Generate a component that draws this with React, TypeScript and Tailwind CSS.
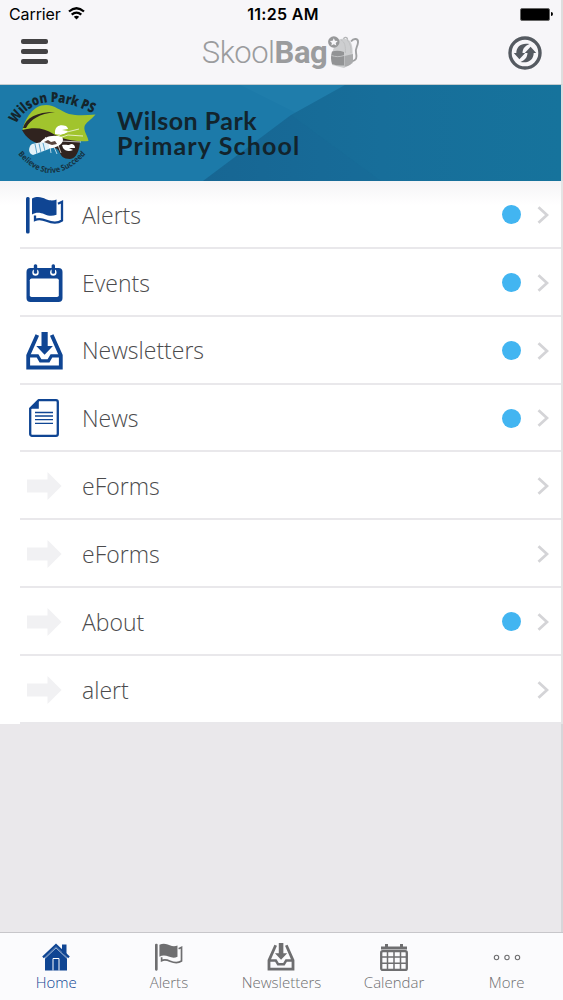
import { FC, ReactNode } from 'react';

interface IconProps {
  className?: string;
}

const FlagIcon: FC<IconProps> = ({ className }) => (
  <svg viewBox="0 0 38 38" className={className} fill="currentColor">
    <rect x="0" y="1" width="3.600" height="36.500" rx="1.500" />
    <path d="M6 2.500C12-.2 16 1.600 20 3.200c4.500 1.800 8 1.300 10.500.2v15.300c-4 1.700-7.500 1.500-12-.4C14 16.400 10 16.100 6 18.600z" />
    <path
      d="M32 7.700l4-1.900v18.700c-4.500 3-10 2.500-15.500.2-5.500-2.300-8.500-2.200-11.500-.7v-4.500"
      fill="none"
      stroke="currentColor"
      strokeWidth="2.300"
    />
  </svg>
);

const EventsIcon: FC<IconProps> = ({ className }) => (
  <svg viewBox="0 0 37 38" className={className}>
    <rect x="0.500" y="4" width="36" height="34" rx="4" fill="currentColor" />
    <rect x="3.800" y="14.500" width="29" height="18.500" rx="1.800" fill="white" />
    {[9.5, 27.3].map((x) => (
      <g key={x}>
        <circle cx={x} cy="8.500" r="3.200" fill="white" />
        <rect x={x - 1.7} y="0.300" width="3.400" height="9.500" rx="1.500" fill="currentColor" />
      </g>
    ))}
  </svg>
);

const InboxIcon: FC<IconProps> = ({ className }) => (
  <svg viewBox="0 0 37 38" className={className} fill="none" stroke="currentColor">
    <path d="M11.300 3L2.200 23.500v12h32.600v-12L25.700 3" strokeWidth="3.800" />
    <path d="M2 23.800h9.500l3 5h8l3-5H35" strokeWidth="3.200" />
    <path d="M15.500 0h6.200v14h5.200l-8.300 8.700-8.300-8.700h5.200z" fill="currentColor" stroke="none" />
  </svg>
);

const NewsIcon: FC<IconProps> = ({ className }) => (
  <svg viewBox="0 0 30 38" className={className} fill="none" stroke="currentColor">
    <path
      d="M9.500 1.200H27a1.800 1.800 0 011.800 1.800v32a1.800 1.800 0 01-1.800 1.800H3A1.800 1.800 0 011.200 35V9.500z"
      strokeWidth="2.300"
      strokeLinejoin="round"
    />
    <path d="M1 9.700L9.800 1v8.700z" fill="currentColor" stroke="none" />
    <path d="M6 13.500h18M6 17h18M6 20.700h18M6 24.300h18" strokeWidth="1.300" />
  </svg>
);

const ArrowIcon: FC<IconProps> = ({ className }) => (
  <svg viewBox="0 0 36 28" className={className} fill="currentColor">
    <path d="M1 7.500h20.500V0L35.500 14l-14 14v-7.500H1z" />
  </svg>
);

const HomeIcon: FC<IconProps> = ({ className }) => (
  <svg viewBox="0 0 28 28" className={className}>
    <path d="M20 1.500h4.500v10H20z" fill="currentColor" />
    <path d="M3 14L14 3.500 25 14v13.500H3z" fill="currentColor" />
    <path d="M1 14.300L14 2l13 12.300" fill="none" stroke="currentColor" strokeWidth="2.300" />
    <path d="M2.800 15.500L14 4.800l11.200 10.700" fill="none" stroke="white" strokeWidth="0.700" />
    <path d="M11 27.500V15.500h6v12" fill="none" stroke="white" strokeWidth="1" />
  </svg>
);

const CalendarIcon: FC<IconProps> = ({ className }) => (
  <svg viewBox="0 0 28 28" className={className} fill="none" stroke="currentColor">
    <path d="M1 5h26M6.500 1v4M21.500 1v4" strokeWidth="3" />
    <rect x="1.200" y="8.200" width="25.600" height="18.800" rx="1.500" strokeWidth="2.300" />
    <path d="M7.500 8v19M14 8v19M20.500 8v19M1 14h26M1 20.300h26" strokeWidth="1.500" />
  </svg>
);

const MoreIcon: FC<IconProps> = ({ className }) => (
  <svg viewBox="0 0 28 28" className={className} fill="none" stroke="currentColor" strokeWidth="1.100">
    <circle cx="3.500" cy="14.500" r="2.200" />
    <circle cx="14" cy="14.500" r="2.200" />
    <circle cx="24.500" cy="14.500" r="2.200" />
  </svg>
);

const BackpackIcon: FC<IconProps> = ({ className }) => (
  <svg viewBox="0 0 32 33" className={className}>
    <path
      d="M23 5.500c3-4 7.500-3 7 1-.3 4-3 6-2 10 1 5 1 8-5 9"
      fill="none"
      stroke="#9fa0a2"
      strokeWidth="1.900"
    />
    <path d="M15.500 4c0-3.500 4-3.500 4 0" fill="none" stroke="#b2b3b5" strokeWidth="1.300" />
    <path d="M8 7c2-4 5-4.500 9-4 5 0 7 4 7.500 10l.5 14-9 5-12-3 1-15z" fill="#cdced0" />
    <path d="M13 4c4 2 4.500 6 4.500 13M19 4c3 3 4 6 4 13" fill="none" stroke="#bbbcbe" strokeWidth="0.800" />
    <path d="M16.500 20l8.500-2v7.500q-3 5-8.500 5z" fill="#a9aaac" />
    <path d="M4 15.500q6-1.500 12 .5v13.500q-7 .5-12-1.500-2-6 0-12.500z" fill="#929395" />
    <path d="M3.500 19.500c4 1.500 8.500 1.500 12.500 0" fill="none" stroke="#c4c5c7" strokeWidth="0.900" />
    <circle cx="5.800" cy="6" r="5.700" fill="#97989a" />
    <path d="M5.800 2.200l1.200 2.500 2.700.3-2 1.900.6 2.700-2.500-1.400-2.500 1.400.6-2.700-2-1.900 2.700-.3z" fill="#f7f6f9" />
  </svg>
);

const RefreshIcon: FC<IconProps> = ({ className }) => (
  <svg viewBox="0 0 34 34" className={className} fill="#555a61">
    <circle cx="17" cy="17" r="15" fill="none" stroke="#555a61" strokeWidth="3.400" />
    <path d="M21.500 8C13 6.500 8.500 10.500 8.300 17H5.800l5.600 6.200 5.800-6.200h-2.700c.2-4.500 2.600-7.300 7-9z" />
    <path d="M12.500 26c8.500 1.500 13-2.500 13.200-9h2.500l-5.600-6.200-5.800 6.200h2.700c-.2 4.500-2.600 7.300-7 9z" />
  </svg>
);

const SchoolLogo: FC<IconProps> = ({ className }) => (
  <svg viewBox="0 0 90 90" className={className}>
    <defs>
      <path id="arcTop" d="M7 36C20 13 44 6 84 25.500" />
      <path id="arcBottom" d="M9 66Q41 104 77 66" />
    </defs>
    <path
      d="M13 42c8-4 19-6 30 2 9 6 20 8 28 8 0 10-4 19-10 19-7 0-9-3-11-8-2-4-7-3-13-5C24 55 17 50 13 42z"
      fill="#30231f"
    />
    <path
      d="M13.500 42C16 31 24 17 37 17c9 0 14 6 23 9 9 2 18 1 26.500.5-4 5-10 8-11 12-1 5 3 9 4 14.500-11 1-25-1-35-7-9-6-19-7-31-4z"
      fill="#a1c42d"
    />
    <path d="M14 40C17 30 27 24 46 24 30 26 22 31 17 40z" fill="#30231f" />
    <path d="M46 43c1-5 5-7 11-5 1 1 2 2 2 3l-6 1 6 1c-3 4-8 4-13 3z" fill="white" />
    <path d="M53 57c4-1 6 1 9-1 3 0 4 2 4 4l-6 0 4 2c-4 2-8 1-10-2z" fill="white" />
    <path d="M31 55c4-6 12-9 22-6 3 4-1 9-9 11-5 1-8 0-13 3z" fill="white" />
    <path d="M23 56l10-2 7 1v6l-8 3-8 3c-5-1-5-8-1-11z" fill="#e4f2f9" />
    <path d="M26 56l2 10M30 55.500l2 9M34 55l2 8" stroke="#5ba3cb" strokeWidth="1" />
    <path
      d="M46 50l8-5 16-4M47 51l12-4 15 1M50 53l22 1M45 59l3 7M49 57l3 8M39 52l-3-3M41 59l1 6"
      fill="none"
      stroke="white"
      strokeWidth="0.700"
    />
    <path d="M35 54l4-2 3 2 4-1 2 3-5 1-3-1z" fill="#5a4640" />
    <text className="font-['Open_Sans'] text-[14px] font-extrabold" fill="#14252c">
      <textPath href="#arcTop" textLength="87" lengthAdjust="spacingAndGlyphs">
        Wilson Park PS
      </textPath>
    </text>
    <text className="font-['Open_Sans'] text-[8px] font-bold" fill="#16313e">
      <textPath href="#arcBottom" textLength="80" lengthAdjust="spacingAndGlyphs">
        Believe Strive Succeed
      </textPath>
    </text>
  </svg>
);

interface MenuItem {
  label: string;
  icon: ReactNode;
  unread?: boolean;
}

const arrow = <ArrowIcon className="h-7 w-9 text-[#f1f1f3]" />;

const menu: MenuItem[] = [
  { label: 'Alerts', icon: <FlagIcon className="size-[38px]" />, unread: true },
  { label: 'Events', icon: <EventsIcon className="h-[38px] w-[37px]" />, unread: true },
  { label: 'Newsletters', icon: <InboxIcon className="h-[38px] w-[37px]" />, unread: true },
  { label: 'News', icon: <NewsIcon className="ml-[3px] h-[38px] w-[30px]" />, unread: true },
  { label: 'eForms', icon: arrow },
  { label: 'eForms', icon: arrow },
  { label: 'About', icon: arrow, unread: true },
  { label: 'alert', icon: arrow },
];

const tabs = [
  { label: 'Home', Icon: HomeIcon, active: true },
  { label: 'Alerts', Icon: FlagIcon },
  { label: 'Newsletters', Icon: InboxIcon },
  { label: 'Calendar', Icon: CalendarIcon },
  { label: 'More', Icon: MoreIcon },
];

const StatusBar = () => (
  <div className="grid h-7 grid-cols-3 items-center pr-2 pl-[9px] font-['Inter',sans-serif] text-base leading-none text-black">
    <div className="flex items-center gap-[7px]">
      <span className="tracking-[-0.100px]">Carrier</span>
      <svg viewBox="0 0 17 13" className="mb-0.5 h-[13px] w-[17px]" fill="none" stroke="black" strokeWidth="2.300">
        <path d="M1 4.500q7.500-6.500 15 0M3.700 7.600q4.800-4 9.600 0" />
        <path d="M8.500 12.500L5.800 9.800q2.700-2 5.400 0z" fill="black" stroke="none" />
      </svg>
    </div>
    <p className="pl-1 text-center font-semibold tracking-[0.300px] whitespace-nowrap">11:25 AM</p>
    <div className="flex items-center justify-end gap-px">
      <div className="h-[13px] w-[30px] rounded-[2px] border border-[#666] bg-black" />
      <div className="h-1 w-[2px] rounded-r-full bg-black" />
    </div>
  </div>
);

const App: FC = () => {
  return (
    <div className="flex h-[1000px] w-[563px] flex-col overflow-hidden bg-[#eae8eb] font-['Open_Sans',sans-serif]">
      <header className="h-[85px] shrink-0 border-r-2 border-b border-r-[#dedede] border-b-[#c5cccf] bg-[#f7f6f9]">
        <StatusBar />
        <div className="flex h-[50px] items-center justify-between pr-[19px] pl-[21px]">
          <div className="flex w-[27px] flex-col gap-[5px] pb-1">
            <span className="h-[5px] rounded-[2px] bg-[#434244]" />
            <span className="h-[5px] rounded-[2px] bg-[#434244]" />
            <span className="h-[5px] rounded-[2px] bg-[#434244]" />
          </div>
          <div className="flex items-center pb-[2px] pl-1.5">
            <h1 className="font-['Roboto',sans-serif] text-[31px] leading-none tracking-[-0.500px] text-[#9b9c9e]">
              <span className="font-light">Skool</span>
              <span className="font-bold">Bag</span>
            </h1>
            <BackpackIcon className="ml-px h-[33px] w-8" />
          </div>
          <RefreshIcon className="size-[34px]" />
        </div>
      </header>

      <section className="relative h-24 shrink-0 border-r-2 border-[#d8dde0] bg-[#1c7aa9]">
        <svg viewBox="0 0 561 96" preserveAspectRatio="none" className="absolute inset-0 size-full">
          <defs>
            <linearGradient id="shade">
              <stop offset="0" stopColor="#176894" />
              <stop offset="0.500" stopColor="#176e9a" />
              <stop offset="1" stopColor="#16739c" />
            </linearGradient>
          </defs>
          <path d="M240 0h105L296 28z" fill="#1f7dab" />
          <path d="M345 0h216v96H203L291 30z" fill="url(#shade)" />
          <path d="M291 30l90 66H203z" fill="#155f8c" opacity="0.080" />
        </svg>
        <div className="relative flex h-full items-center">
          <SchoolLogo className="ml-[9px] size-[90px] shrink-0 overflow-visible" />
          <h2 className="ml-[18px] font-['Lato',sans-serif] text-[25px] leading-[25px] font-bold text-[#12242d]">
            <span className="block tracking-[0.500px]">Wilson Park</span>
            <span className="block tracking-[1.150px]">Primary School</span>
          </h2>
        </div>
      </section>

      <main className="shrink-0 border-r-2 border-[#e4e4e4] bg-white bg-linear-to-b from-[#f5f4f6] to-white to-[24px]">
        <ul>
          {menu.map((item, i) => (
            <li key={i} className="h-[67.850px] pl-5">
              <div className="flex h-full items-center border-b-2 border-[#e9e8eb] pt-[2px] pr-3">
                <div className="flex w-[62px] shrink-0 items-center pl-[5.500px] text-[#0f4593]">{item.icon}</div>
                <span className="flex-1 text-[23px] font-light text-[#4b4b4d]">{item.label}</span>
                {item.unread && <span className="mr-4 size-[19px] rounded-full bg-[#42b5f1]" />}
                <svg viewBox="0 0 12 18" className="h-[18px] w-3" fill="none" stroke="#d4d4d7" strokeWidth="2.800">
                  <path d="M1.500 1.200L10 9l-8.500 7.800" />
                </svg>
              </div>
            </li>
          ))}
        </ul>
      </main>

      <div className="flex-1 border-r-2 border-[#d7d6d9]" />

      <nav className="grid h-[68px] shrink-0 grid-cols-5 border-t border-[#c7c6ca] bg-[#fbfbfd]">
        {tabs.map(({ label, Icon, active }) => (
          <div
            key={label}
            className={`flex flex-col items-center pt-[10px] ${active ? 'text-[#0f4593]' : 'text-[#6e6e70]'}`}
          >
            <Icon className="h-7 w-7" />
            <span className="text-[15px] leading-[22px] font-light">{label}</span>
          </div>
        ))}
      </nav>
    </div>
  );
};

export default App;
